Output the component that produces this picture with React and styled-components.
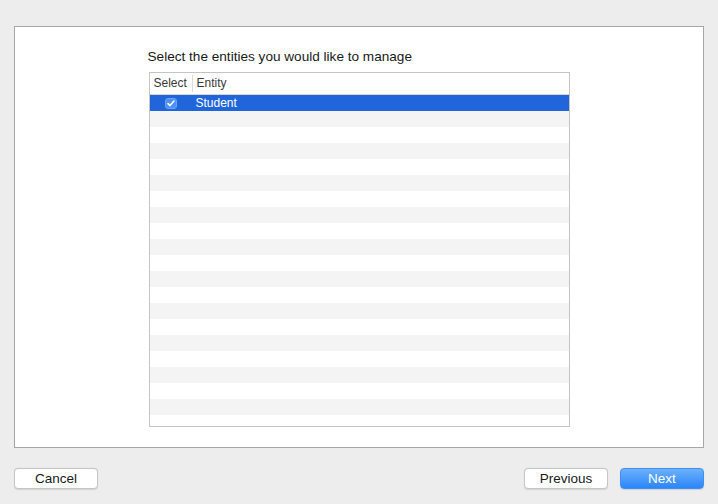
import React from 'react';
import styled, { createGlobalStyle } from 'styled-components';

const GlobalStyle = createGlobalStyle`
  html, body {
    margin: 0;
    padding: 0;
    background: #ededed;
    font-family: "Liberation Sans", Arial, sans-serif;
  }
`;

const Window = styled.div`
  width: 718px;
  height: 504px;
  box-sizing: border-box;
  padding: 26px 14px 0;
  display: flex;
  flex-direction: column;
`;

const Panel = styled.div`
  height: 422px;
  box-sizing: border-box;
  background: #ffffff;
  border: 1px solid #a6a6a6;
  display: flex;
  flex-direction: column;
  align-items: center;
  padding-top: 21px;
`;

const Content = styled.div`
  width: 421px;
  display: flex;
  flex-direction: column;
  gap: 8px;
`;

const Title = styled.div`
  font-size: 13.6px;
  line-height: 16px;
  padding-top: 1px;
  margin-bottom: -1px;
  color: #1a1a1a;
  margin-left: -1px;
`;

const Table = styled.div`
  height: 355px;
  box-sizing: border-box;
  border: 1px solid #c4c4c4;
  overflow: hidden;
  display: flex;
  flex-direction: column;
`;

const Header = styled.div`
  height: 22px;
  flex: none;
  box-sizing: border-box;
  border-bottom: 1px solid #d5d5d5;
  display: flex;
  align-items: center;
  font-size: 12px;
  color: #3a3a3a;
`;

const HeadCell = styled.div`
  width: ${(p) => p.$width || 'auto'};
  flex: ${(p) => (p.$width ? 'none' : '1')};
  box-sizing: border-box;
  padding-left: 4px;
  height: 17px;
  line-height: 17px;
  border-right: ${(p) => (p.$divider ? '1px solid #dcdcdc' : 'none')};
`;

const Row = styled.div`
  height: 16px;
  flex: none;
  display: flex;
  align-items: center;
  font-size: 12px;
  background: ${(p) => (p.$selected ? '#2065d9' : p.$odd ? '#f4f4f4' : '#ffffff')};
  color: ${(p) => (p.$selected ? '#ffffff' : '#1a1a1a')};
`;

const CheckCell = styled.div`
  width: 43px;
  flex: none;
  display: flex;
  justify-content: center;
`;

const Check = styled.div`
  width: 12px;
  height: 11px;
  box-sizing: border-box;
  border-radius: 3px;
  background: #4c8ff5;
  border: 1px solid #6aa3f7;
  display: flex;
  align-items: center;
  justify-content: center;
`;

const NameCell = styled.div`
  padding-left: 3px;
`;

const Footer = styled.div`
  margin-top: 20px;
  display: flex;
  align-items: center;
`;

const Spacer = styled.div`
  flex: 1;
`;

const Button = styled.button`
  width: 84px;
  height: 21px;
  box-sizing: border-box;
  border-radius: 4px;
  font-family: "Liberation Sans", Arial, sans-serif;
  font-size: 13.5px;
  padding: 0;
  margin-left: ${(p) => (p.$gap ? '12px' : '0')};
  border: 1px solid ${(p) => (p.$primary ? '#3f8ef7' : '#c6c6c6')};
  background: ${(p) =>
    p.$primary ? 'linear-gradient(#6db1fb, #2a86fa)' : '#ffffff'};
  color: ${(p) => (p.$primary ? '#ffffff' : '#1a1a1a')};
  box-shadow: 0 0.5px 1px rgba(0, 0, 0, 0.12);
`;

const rows = Array.from({ length: 21 }, (_, i) => i);

export default function App() {
  return (
    <>
      <GlobalStyle />
      <Window>
        <Panel>
          <Content>
            <Title>Select the entities you would like to manage</Title>
            <Table>
              <Header>
                <HeadCell $width="43px" $divider>
                  Select
                </HeadCell>
                <HeadCell>Entity</HeadCell>
              </Header>
              {rows.map((i) =>
                i === 0 ? (
                  <Row key={i} $selected>
                    <CheckCell>
                      <Check>
                        <svg width="8" height="7" viewBox="0 0 8 7">
                          <path
                            d="M1 3.6 L3 5.6 L7 1"
                            fill="none"
                            stroke="#ffffff"
                            strokeWidth="1.5"
                            strokeLinecap="round"
                            strokeLinejoin="round"
                          />
                        </svg>
                      </Check>
                    </CheckCell>
                    <NameCell>Student</NameCell>
                  </Row>
                ) : (
                  <Row key={i} $odd={i % 2 === 1} />
                )
              )}
            </Table>
          </Content>
        </Panel>
        <Footer>
          <Button>Cancel</Button>
          <Spacer />
          <Button>Previous</Button>
          <Button $primary $gap>
            Next
          </Button>
        </Footer>
      </Window>
    </>
  );
}
